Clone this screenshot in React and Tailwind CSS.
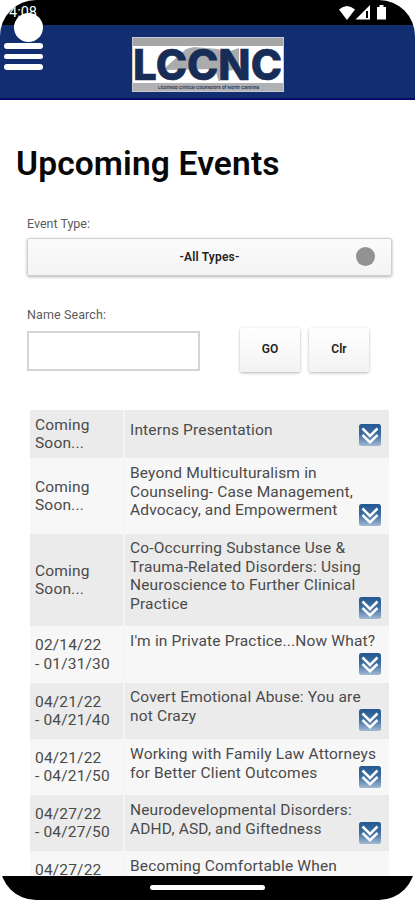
import React from 'react';

const events = [
  { date: 'Coming\nSoon...', title: 'Interns Presentation', row: 'h-12', pad: 'pt-[11px] pb-3' },
  { date: 'Coming\nSoon...', title: 'Beyond Multiculturalism in\nCounseling- Case Management,\nAdvocacy, and Empowerment', row: 'h-[76px]', pad: 'pt-[6px] pb-2' },
  { date: 'Coming\nSoon...', title: 'Co-Occurring Substance Use &\nTrauma-Related Disorders: Using\nNeuroscience to Further Clinical\nPractice', row: 'h-[92px]' },
  { date: '02/14/22\n- 01/31/30', title: "I'm in Private Practice...Now What?", row: 'h-[57px]', pad: 'pt-[6px] pb-2' },
  { date: '04/21/22\n- 04/21/40', title: 'Covert Emotional Abuse: You are\nnot Crazy', row: 'h-14' },
  { date: '04/21/22\n- 04/21/50', title: 'Working with Family Law Attorneys\nfor Better Client Outcomes', row: 'h-14', pad: 'pt-[6px] pb-2' },
  { date: '04/27/22\n- 04/27/50', title: 'Neurodevelopmental Disorders:\nADHD, ASD, and Giftedness', row: 'h-14', pad: 'pt-[6px] pb-2' },
  { date: '04/27/22\n- 04/27/50', title: 'Becoming Comfortable When\nWorking with Couples', row: 'h-14', pad: 'pt-[6px] pb-2' },
];

const ExpandIcon = () => (
  <svg width="22" height="22" viewBox="0 0 22 22" className="-mt-4 shrink-0 self-end">
    <defs>
      <linearGradient id="expand" x1="0" y1="0" x2="0" y2="1">
        <stop offset="0" stopColor="#235891" />
        <stop offset="0.5" stopColor="#3f6fa3" />
        <stop offset="1" stopColor="#a3b9d2" />
      </linearGradient>
    </defs>
    <rect width="22" height="22" rx="2.5" fill="url(#expand)" />
    <path d="M3.5 4.5 11 12l7.500-7.500M3.500 11 11 18.300 18.500 11" fill="none" stroke="#fff" strokeWidth="2.500" />
  </svg>
);

const StatusBar = () => (
  <div className="flex h-[25px] shrink-0 items-start justify-between bg-black pl-[9px] pr-[27px] pt-[5px] text-white">
    <span className="text-[14.500px] leading-[16px]">4:08</span>
    <svg width="49" height="15" viewBox="0 0 49 15" fill="#fff">
      <path d="M0 4.500Q8-2.500 16 4.500L8 15z" />
      <path fillRule="evenodd" d="M31 0v14.500H16.500zM27 6v7h2V6z" />
      <path d="M38 2h2.500V0h4v2H47v12.500h-9z" />
    </svg>
  </div>
);

const Logo = () => (
  <svg width="152" height="55" viewBox="0 0 152 55" className="overflow-visible">
    <rect x="0.5" y="0.5" width="151" height="54" fill="#fff" stroke="#c9cbd3" />
    <path d="M1 1h150v8H1z" fill="#a6a6a6" />
    <path d="M1 46h150v8H1z" fill="#b1b1b3" />
    <path d="M34 30 54 12l8-2 24 2 6 4 15-5v20l-14 4-6 10-4-13-51 1z" fill="#a9abac" />
    <text x="1" y="43" textLength="149" lengthAdjust="spacingAndGlyphs" fill="#172c57" stroke="#172c57" strokeWidth="0.6" className="font-[Inter] text-[42px] font-extrabold">LCCNC</text>
    <text x="26" y="51.500" textLength="101" lengthAdjust="spacingAndGlyphs" fill="#172c57" className="font-[Inter] text-[4px] font-semibold">Licensed Clinical Counselors of North Carolina</text>
  </svg>
);

const Header = () => (
  <header className="relative flex h-[75px] shrink-0 justify-center border-b-2 border-[#020b68] bg-[#122d70] pt-3">
    <button className="absolute left-1 top-[18px] flex flex-col gap-[5px]" aria-label="Menu">
      <span className="h-[5.500px] w-[39px] rounded-full bg-white" />
      <span className="h-[5.500px] w-[39px] rounded-full bg-white" />
      <span className="h-[5.500px] w-[39px] rounded-full bg-white" />
    </button>
    <div className="absolute -top-3 left-[14px] h-[29px] w-[29px] rounded-full bg-white" />
    <Logo />
  </header>
);

const EventRow = ({ event }) => (
  <div className={`flex shrink-0 odd:bg-[#ebebeb] even:bg-[#f7f7f7] ${event.row}`}>
    <div className="flex w-[95px] items-center border-r-2 border-[#f5f5f5] pl-[5px] whitespace-pre-line">
      {event.date}
    </div>
    <div className={`flex flex-1 flex-col justify-between pl-[5px] pr-2 whitespace-pre ${event.pad || 'pt-[5px] pb-2'}`}>
      <p>{event.title}</p>
      <ExpandIcon />
    </div>
  </div>
);

const App = () => {
  return (
    <div className="h-[900px] w-[415px] bg-white font-[Roboto,sans-serif] text-[#4a4a4a]">
      <div className="flex h-full flex-col overflow-hidden rounded-t-[36px] rounded-b-[36px] bg-white">
        <StatusBar />
        <Header />

        <main className="flex min-h-0 flex-1 flex-col overflow-hidden">
          <h1 className="mt-11 ml-4 text-[33.500px] leading-[40px] font-semibold tracking-[0.150px] whitespace-nowrap text-[#080808]">
            Upcoming Events
          </h1>

          <div className="mt-8 flex flex-col pl-[27px] text-[12.500px] leading-[16px] text-[#5c5c5c]">
            <label>Event Type:</label>
            <button className="relative mt-[6px] h-[38px] w-[365px] rounded-[2px] border border-[#d0d0d0] bg-linear-to-b from-[#fbfbfb] to-[#f4f4f4] pb-px text-[12px] font-semibold tracking-[0.200px] text-[#222] shadow-[0_1px_3px_rgba(0,0,0,0.300)]">
              -All Types-
              <span className="absolute top-[8px] right-[16px] h-[19px] w-[19px] rounded-full bg-[#929292]" />
            </button>

            <label className="mt-[31px] tracking-[0.100px]">Name Search:</label>
            <div className="mt-[5px] flex text-[12px] font-semibold text-[#222]">
              <input className="mt-[3px] h-10 w-[173px] border-2 border-[#d4d4d4] bg-white px-2 outline-none" />
              <button className="ml-10 h-[44px] w-[60px] rounded-[2px] bg-linear-to-b from-white to-[#f2f2f2] pb-0.5 shadow-[0_1px_3px_rgba(0,0,0,0.300)]">GO</button>
              <button className="ml-[9px] h-[44px] w-[60px] rounded-[2px] bg-linear-to-b from-white to-[#f2f2f2] pb-0.5 shadow-[0_1px_3px_rgba(0,0,0,0.300)]">Clr</button>
            </div>
          </div>

          <div className="mt-[38px] ml-[30px] flex w-[359px] flex-col text-[15.500px] leading-[18.500px] tracking-[0.170px]">
            {events.map((event, i) => (
              <EventRow key={i} event={event} />
            ))}
          </div>
        </main>

        <div className="flex h-6 shrink-0 justify-center bg-black pt-[9px]">
          <div className="h-[5px] w-[115px] rounded-full bg-white" />
        </div>
      </div>
    </div>
  );
};

export default App;
